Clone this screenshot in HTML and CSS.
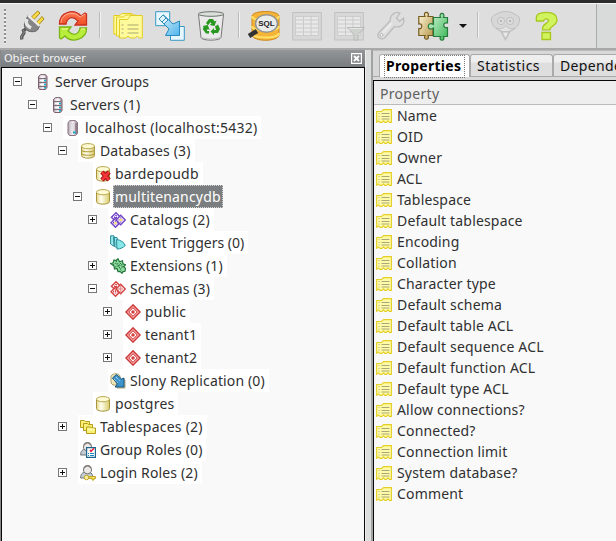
FILE: index.html
```html
<!DOCTYPE html>
<html lang="en">
<head>
<meta charset="utf-8">
<title>Object browser</title>
<link rel="stylesheet" href="styles.css">
</head>
<body>
<svg class="defs" aria-hidden="true">
  <defs>
    <linearGradient id="gold" x1="0" x2="1"><stop offset="0" stop-color="#e5d889"/><stop offset=".35" stop-color="#fffff0"/><stop offset="1" stop-color="#d8cb6a"/></linearGradient>
    <linearGradient id="steel" x1="0" x2="1"><stop offset="0" stop-color="#b0a4b0"/><stop offset=".5" stop-color="#f5f3f5"/><stop offset="1" stop-color="#9b8a96"/></linearGradient>
    <linearGradient id="red" x1="0" y1="0" x2="0" y2="1"><stop offset="0" stop-color="#ff7a55"/><stop offset="1" stop-color="#ee4f22"/></linearGradient>
    <linearGradient id="blue" x1="0" y1="0" x2="1" y2="1"><stop offset="0" stop-color="#dff4ff"/><stop offset="1" stop-color="#4fb4ea"/></linearGradient>
    <linearGradient id="tan" x1="0" y1="0" x2="1" y2="1"><stop offset="0" stop-color="#fff8dc"/><stop offset="1" stop-color="#b49345"/></linearGradient>
    <linearGradient id="green" x1="0" y1="0" x2="1" y2="1"><stop offset="0" stop-color="#d8f8dc"/><stop offset="1" stop-color="#38b556"/></linearGradient>
    <symbol id="servers" viewBox="0 0 16 16"><path d="M3.500 2.500 5.500.6h5l1.500 1.900v11l-1.500 2h-6l-1-1.500z" fill="url(#steel)" stroke="#80606f"/><path d="M4 4.500h7M4 8.500h7M4 12.500h7" stroke="#806b7a"/><path d="M5 3h5M5 6.500h4M5 10.500h4" stroke="#fff"/><path d="M9 6.500h2M9 10.500h2M9 13.800h2" stroke="#19b5cc" stroke-width="1.500"/></symbol>
    <symbol id="server" viewBox="0 0 16 16"><path d="M3 2.500 5 .6h5.500l2 1.900v11l-2 2h-6L3 13.500z" fill="url(#steel)" stroke="#8b7480"/><path d="M4.500 4h6M5.500 4v10M8 4v9" stroke="#dad5da"/><path d="M11 3v11" stroke="#765c6a"/><path d="M8 12.500h3" stroke="#26acc1" stroke-width="2"/></symbol>
    <symbol id="database" viewBox="0 0 16 16"><path d="M1.500 3.200v9.300c0 3.500 13 3.500 13 0V3.200z" fill="url(#gold)" stroke="#a8943a"/><ellipse cx="8" cy="3.200" rx="6.500" ry="2.600" fill="#fffbd5" stroke="#b7a54c"/></symbol>
    <symbol id="databases" viewBox="0 0 16 16"><use href="#database"/><path d="M1.500 6.500c0 3 13 3 13 0M1.500 10c0 3 13 3 13 0" fill="none" stroke="#b7a54c" stroke-width="1.200"/></symbol>
    <symbol id="database-off" viewBox="0 0 16 16"><use href="#database"/><path d="m7 6 7 8m0-8-7 8" stroke="#a70f18" stroke-width="4.500"/><path d="m7 6 7 8m0-8-7 8" stroke="#f43737" stroke-width="2.600"/></symbol>
    <symbol id="stack" viewBox="0 0 16 16"><g fill="#fff" stroke="currentColor" stroke-width="1.500"><path d="m6 .8 4.500 4.500L6 9.800 1.500 5.300z"/><path d="m5.500 6.200 4.500 4.500-4.500 4.500L1 10.700z"/><path d="m10.700 3.300 4.600 4.700-4.600 4.700L6.100 8z"/></g><path d="M4 5.300h4M3 10.700h5M8.500 8h4.500M6 3v4M5.500 8.500v4.500M10.700 5.500v5" stroke="currentColor" stroke-width="1.700" stroke-dasharray="1 1"/></symbol>
    <symbol id="catalogs" viewBox="0 0 16 16"><use href="#stack"/><path d="M9.500 8h2.500M4.500 11h2" stroke="#ffe866" stroke-width="2"/></symbol>
    <symbol id="triggers" viewBox="0 0 16 16"><path d="M.6.800H4l1 9.500-1.500.700L.6 9zM3.500 2.500H7l2 9-2.500 1L4 11z" fill="#9be8ea" stroke="#298b99"/><path d="M6.500 4.500c4.500.500 7.500 3 8.800 6-2 2-5 3.700-8.300 3.500z" fill="#87e8e9" stroke="#298b99"/></symbol>
    <symbol id="extensions" viewBox="0 0 16 16"><path d="m.7 5.500 2.300-.5 1-3 2 .5L8 .8l1.500 3 3-1 .5 3 2.500 1-2 2 2 1.500-.5 3-2 .3-1 1.700-2-2-2 .2-1-3-2.500.5-.5-3z" fill="#8fdda1" stroke="#24743a" stroke-width="1.200"/><path d="m3 7 3-2 2 3 3-3 2 4-3 2 2 2M6 3l3 4 3 1M5 9l4-1 1 3" fill="none" stroke="#24743a" stroke-dasharray="1.500 1"/></symbol>
    <symbol id="schema" viewBox="0 0 16 16"><path d="m8 .8 7.200 7.200L8 15.200.8 8z" fill="#f4a0a0" stroke="#cc3434" stroke-width="1.300"/><path d="m8 3.800 4.200 4.200L8 12.200 3.800 8z" fill="#fff" stroke="#d44141"/><circle cx="8" cy="8" r="1.800" fill="#d44141"/></symbol>
    <symbol id="slony" viewBox="0 0 16 16"><path d="M1 3c2-3 8-3 9 0v9H3L1 10z" fill="#eee7ba" stroke="#aaa174"/><path d="M6 7h9v8H7z" fill="#eee7ba" stroke="#aaa174"/><path d="m2.500 5 4-3.500 5 4.500 2.500-1v9H5l2.500-3z" fill="#3f94cc" stroke="#17557d"/><path d="m4 6 4 4m-2-6 4 4" stroke="#d6eeff" stroke-dasharray="1 1"/></symbol>
    <symbol id="folders" viewBox="0 0 16 16"><g fill="#f8ef78" stroke="#b49c19"><path d="M.5 1.500h4l1 1h4v6h-9z"/><path d="M3.500 4.500h4l1 1h4v6h-9z"/><path d="M6.500 8h4l1 1h4v5.500h-9z"/></g><path d="M7.500 10.500h7" stroke="#fffba8" stroke-width="2"/></symbol>
    <symbol id="person" viewBox="0 0 16 16"><path d="M.6 13c0-4 2-5.500 4-5.500h5c2 0 3 2 3.400 5.500z" fill="#c2cbd0" stroke="#6d7478"/><path d="M3.500 5c0-6 8-6 8 0 0 5-8 5-8 0z" fill="#ede9e6" stroke="#74716f"/><path d="M4 3c2-3 5-3 7 0" fill="none" stroke="#807d79" stroke-width="1.500"/></symbol>
    <symbol id="group-role" viewBox="0 0 16 16"><use href="#person"/><path d="M6.600 5.600h8.800v9.800H6.600z" fill="#fff" stroke="#1c658d" stroke-width="1.200"/><path d="m10 8 1 1.300 3-3" fill="none" stroke="#e51e35" stroke-width="1.500"/><path d="M8 11.500h1m1 0h4m-6 2h1m1 0h4" stroke="#1685c0"/></symbol>
    <symbol id="login-role" viewBox="0 0 16 16"><use href="#person"/><circle cx="6.500" cy="12.500" r="2.300" fill="#f7ed9c" stroke="#c2a72a"/><path d="M9 11.500h6.500v2H14v1.500h-2v-1.500H9z" fill="#f3df55" stroke="#c2a72a"/></symbol>
    <symbol id="property" viewBox="0 0 16 14"><path d="M.6 2.500h5l2-1.900h7.800v12.800h-2l-1.500-1.500-1.500 1.500H9l-1.500-1.500L6 13.400H4l-1.500-1.500L.6 13.400z" fill="#fffaa8" stroke="#e4cf25" stroke-width="1.100"/><path d="M2.500 4.500h1m2 0h8m-11 3h1m2 0h8m-11 2.500h1m2 0h8" stroke="#aaa879"/></symbol>
    <symbol id="grid" viewBox="0 0 30 30"><path d="M.7 1.500h28.600v27.500H.7z" fill="#d8d8d8" stroke="#bfc1bf"/><path d="M3.500 5.500h23v19h-23z" fill="#e8e8e8" stroke="#cdcdcd"/><path d="M4 9h22M4 13h22M4 17h22M4 21h22M11.500 5v20M19 5v20" stroke="#cacaca"/></symbol>
  </defs>
</svg>

<div class="window">
  <header class="toolbar">
    <div class="tools">
      <span class="grip"></span>
      <svg class="tool" viewBox="0 0 30 30"><path d="M5 28.500c-2-6 4-4 1.500-9l3-2" fill="none" stroke="#555" stroke-width="3.200"/><path d="M5 28c-2-5 4-4 1.500-9" fill="none" stroke="#999"/><path d="m14.500 6 6-6 2.500 2-6 6.500zm4.500 6 6-6.500 2 2.500-5.500 6z" fill="#f8da47" stroke="#a98915"/><path d="M11 4.500 22.500 15l-2 4c-3 2.500-8 2-11 0-3-3-2.500-7-.5-10z" fill="#858585" stroke="#606060"/><path d="M11 4.500 22.500 15" stroke="#ececec" stroke-width="2.200"/><path d="M10 8c-2 4 0 7 4 9" fill="none" stroke="#e5e5e5" stroke-width="3.500"/></svg>
      <svg class="tool refresh" viewBox="0 0 30 30"><path d="M1.500 13C1 1 16-3 23 5l4-3 1.500 1v11H17l3-4C14 4 9 7 8 13z" fill="url(#red)" stroke="#c93020" stroke-width="1.300"/><path d="M28.500 17C29 28 14 33 7 25l-4 3-1.500-1V16H13l-3 4c6 6 11 3 12-3z" fill="#b9ed3c" stroke="#79b516" stroke-width="1.300"/><path d="M3 12C3 3 15-1 22 6l5-3" fill="none" stroke="#ffb094"/><path d="M4 18h6m13 0h4" stroke="#efff9e"/></svg>
      <span class="separator first"></span>
      <svg class="tool" viewBox="0 0 30 30"><g fill="#fffa9c" stroke="#e4cd22"><path d="M.8 4.500h6l2-2h10V23h-2l-2-2-2 2H.8z"/><path d="M3.500 6h7l2-2h10v21h-19z"/><path d="M6.500 8.500h8l3-4h11.800v22.500h-3l-2-2-2 2H17l-2-2-2 2H6.500z"/></g><path d="M8.500 14h2m4 0h11m-17 4h2m4 0h11m-17 4h2m4 0h11" stroke="#aaa76e" stroke-width="1.200"/></svg>
      <svg class="tool" viewBox="0 0 30 30"><path d="M.7.700h14v14H.7zM15.500 15.500h13.800v13.800H15.500z" fill="#e8f6fd" stroke="#379ac5"/><path d="m4 8 4.500-4 9.500 9 6.500-3v14.500H10.500L14 18z" fill="url(#blue)" stroke="#268bc0"/><path d="m4 8 4-4 5 5-4 4zM7 11l4-4" fill="#dff3ff" stroke="#348ebb"/></svg>
      <svg class="tool" viewBox="0 0 30 30"><path d="M1.500 3.500h25L24 26.500c-.4 3.500-19.600 3.500-20 0z" fill="#e9eae9" stroke="#777"/><ellipse cx="14" cy="3" rx="12.700" ry="2.300" fill="#dce0dc" stroke="#6d736e"/><path d="M5 26.500c4 2 13 2 18 0" fill="none" stroke="#bbb"/><g fill="#289821"><path d="m9 12 3-4h4l1.500 2.500 2-1-2 5.500-5-1 2-1.200-1-1.500-2.500 3z"/><path d="m18 15.500 3-2 2 4.500-2 4h-4v2l-3.500-3.500 3.500-3.500v2h2z"/><path d="M12 22.500H9L5.700 18l1-2-1-1 5-1 2 5-2-1-1 2H12z"/></g></svg>
      <span class="separator second"></span>
      <svg class="tool sql" viewBox="0 0 30 30"><path d="M3 5c1-6 26-6 27 0v19c-1 7-26 7-27 0z" fill="#f5b437" stroke="#ce8618"/><path d="M3 5c0 6 27 6 27 0M3 15c0 6 27 6 27 0M3 22c0 6 27 6 27 0" fill="none" stroke="#ffdf68" stroke-width="2"/><path d="m0 25 8-5" stroke="#333" stroke-width="4.500"/><ellipse cx="17.500" cy="12.500" rx="11" ry="8.800" fill="#e9edef" fill-opacity=".97" stroke="#92938e" stroke-width="1.500"/><text x="17.500" y="14.800">SQL</text></svg>
      <svg class="tool" viewBox="0 0 30 30"><use href="#grid"/></svg>
      <svg class="tool" viewBox="0 0 30 30"><use href="#grid"/><path d="M13.500 16.500h17l-6.500 7V29h-4v-5.500z" fill="#d0d2d0" stroke="#b7bab7"/><path d="M15 17.500h13" stroke="#e5e5e5"/></svg>
      <svg class="tool" viewBox="0 0 30 30"><path d="M14 10c0-6 5-10 10-8l-3.500 5 3 3.500 4-3.500c2 7-4 10-9 8.500L9 26.500c-3 4-10-1-6-5z" fill="#dcdddc" stroke="#b9bab9" stroke-width="1.200"/><path d="m7 22 9-10" stroke="#ebebeb" stroke-width="2"/><circle cx="5.500" cy="24" r="1.500" fill="#eee" stroke="#bbb"/></svg>
      <svg class="tool puzzle" viewBox="0 0 30 30"><path d="M.8 5.500h6.200c-3-5.500 5.500-5.500 3 0h5v19h-5c2.500 5-5.500 5-3 0H.8v-7c4 1.500 4-6 0-4.500z" fill="url(#tan)" stroke="#765b20" stroke-width="1.200"/><path d="M15.500 6.500h7c-2.500-5.500 5.500-5.500 3 0h4V12c-5-1.500-5 6 0 4.500v9h-4c2.500 5-5.500 5-3 0h-7V17c-7 4.500-7-7.500 0-3.500z" fill="url(#green)" stroke="#247b3b" stroke-width="1.200"/></svg>
      <span class="dropdown"></span>
      <span class="separator third"></span>
      <svg class="tool mascot" viewBox="0 0 30 30"><path d="M6 3.500c5-4 14-4 19 0 8 2 4 11 0 14l-5 3-4.500 8.800L11 20.500l-5-3C2 14.500-2 5.500 6 3.500z" fill="#d7d7d7" stroke="#bebfbe"/><g fill="#e2e2e2" stroke="#bebebe"><circle cx="11" cy="10" r="3.500"/><circle cx="20" cy="10" r="3.500"/></g><circle cx="11" cy="10" r="1.300" fill="#b5b5b5"/><circle cx="20" cy="10" r="1.300" fill="#b5b5b5"/><path d="M6 17c5 2 7 0 9.500-2 3 2 5 4 9.500 2-4 5-15 5-19 0z" fill="#e2e2e2" stroke="#bebebe"/><path d="m12 21 3.500 7 3.500-7z" fill="#e8e8e8" stroke="#bebebe"/></svg>
      <svg class="tool help" viewBox="0 0 30 30"><path d="M4.500 10C3 3 8 1.300 14 1.300c7 0 11 2.700 11 7.500 0 6-7 5.700-7 10h-7.500c-.500-7 6-5.800 6-9 0-2.500-4.500-2.500-5 .2zM10 21.500h8.500v7H10z" fill="#d1f45e" stroke="#a8c71e" stroke-width="1.300"/></svg>
    </div>
    <div class="toolbar-rest"></div>
  </header>

  <main class="workspace">
    <section class="browser">
      <h1 class="caption">Object browser<svg class="close" viewBox="0 0 11 11"><path d="M.6.600h9.800v9.800H.6z"/><path class="cross" d="m3 3 5 5m0-5L3 8"/></svg></h1>
      <div class="tree-pane">
        <ul class="tree">
          <li><div class="node"><i class="toggle minus"></i><span class="item"><svg><use href="#servers"/></svg><span class="label plain">Server Groups</span></span></div>
          <ul><li><div class="node"><i class="toggle minus"></i><span class="item"><svg><use href="#servers"/></svg><span class="label">Servers (1)</span></span></div>
            <ul><li><div class="node"><i class="toggle minus"></i><span class="item white"><svg><use href="#server"/></svg><span class="label wide">localhost (localhost:5432)</span></span></div>
              <ul>
                <li><div class="node"><i class="toggle minus"></i><span class="item white"><svg><use href="#databases"/></svg><span class="label">Databases (3)</span></span></div>
                  <ul>
                    <li><div class="node"><i class="toggle none"></i><span class="item white"><svg><use href="#database-off"/></svg><span class="label wide">bardepoudb</span></span></div></li>
                    <li><div class="node"><i class="toggle minus"></i><span class="item white"><svg><use href="#database"/></svg><span class="label selected">multitenancydb</span></span></div>
                      <ul>
                        <li><div class="node"><i class="toggle plus"></i><span class="item white"><svg class="violet"><use href="#catalogs"/></svg><span class="label wide">Catalogs (2)</span></span></div></li>
                        <li><div class="node"><i class="toggle none"></i><span class="item white"><svg><use href="#triggers"/></svg><span class="label plain">Event Triggers (0)</span></span></div></li>
                        <li><div class="node"><i class="toggle plus"></i><span class="item white"><svg><use href="#extensions"/></svg><span class="label">Extensions (1)</span></span></div></li>
                        <li><div class="node"><i class="toggle minus"></i><span class="item white"><svg class="crimson"><use href="#stack"/></svg><span class="label">Schemas (3)</span></span></div>
                          <ul>
                            <li><div class="node"><i class="toggle plus"></i><span class="item white"><svg><use href="#schema"/></svg><span class="label wide">public</span></span></div></li>
                            <li><div class="node"><i class="toggle plus"></i><span class="item white"><svg><use href="#schema"/></svg><span class="label">tenant1</span></span></div></li>
                            <li><div class="node"><i class="toggle plus"></i><span class="item white"><svg><use href="#schema"/></svg><span class="label">tenant2</span></span></div></li>
                          </ul></li>
                        <li><div class="node"><i class="toggle none"></i><span class="item white"><svg><use href="#slony"/></svg><span class="label">Slony Replication (0)</span></span></div></li>
                      </ul></li>
                    <li><div class="node"><i class="toggle none"></i><span class="item white"><svg><use href="#database"/></svg><span class="label wide">postgres</span></span></div></li>
                  </ul></li>
                <li><div class="node"><i class="toggle plus"></i><span class="item white"><svg><use href="#folders"/></svg><span class="label wide">Tablespaces (2)</span></span></div></li>
                <li><div class="node"><i class="toggle none"></i><span class="item white"><svg><use href="#group-role"/></svg><span class="label">Group Roles (0)</span></span></div></li>
                <li><div class="node"><i class="toggle plus"></i><span class="item white"><svg><use href="#login-role"/></svg><span class="label">Login Roles (2)</span></span></div></li>
              </ul></li></ul></li></ul></li>
        </ul>
      </div>
    </section>
    <div class="sash"></div>
    <section class="details">
      <nav class="tabs"><span class="tab active"><b>Properties</b></span><span class="tab statistics">Statistics</span><span class="tab dependencies">Dependencies</span></nav>
      <div class="properties">
        <div class="column">Property</div>
        <ul class="property-list">
          <li><svg><use href="#property"/></svg>Name</li>
          <li><svg><use href="#property"/></svg>OID</li>
          <li><svg><use href="#property"/></svg>Owner</li>
          <li><svg><use href="#property"/></svg>ACL</li>
          <li><svg><use href="#property"/></svg>Tablespace</li>
          <li><svg><use href="#property"/></svg>Default tablespace</li>
          <li><svg><use href="#property"/></svg>Encoding</li>
          <li><svg><use href="#property"/></svg>Collation</li>
          <li><svg><use href="#property"/></svg>Character type</li>
          <li><svg><use href="#property"/></svg>Default schema</li>
          <li><svg><use href="#property"/></svg>Default table ACL</li>
          <li><svg><use href="#property"/></svg>Default sequence ACL</li>
          <li><svg><use href="#property"/></svg>Default function ACL</li>
          <li><svg><use href="#property"/></svg>Default type ACL</li>
          <li><svg><use href="#property"/></svg>Allow connections?</li>
          <li><svg><use href="#property"/></svg>Connected?</li>
          <li><svg><use href="#property"/></svg>Connection limit</li>
          <li><svg><use href="#property"/></svg>System database?</li>
          <li><svg><use href="#property"/></svg>Comment</li>
        </ul>
      </div>
    </section>
  </main>
</div>
</body>
</html>
```
FILE: styles.css
```css
* { box-sizing: border-box; }
body { margin: 0; overflow: hidden; font: 14px/20px "Noto Sans", "Open Sans", sans-serif; color: #303030; }
ul { margin: 0; padding: 0; list-style: none; }
svg { display: block; flex: none; }
.defs { position: absolute; width: 0; height: 0; }
.window { width: 616px; height: 541px; display: flex; flex-direction: column; overflow: hidden; border-top: 3px solid #2c2c2c; background: #ddd; }

.toolbar { display: flex; height: 47px; flex: none; border-top: 1px solid #f5f5f5; border-bottom: 2px solid #a8a8a8; background: #dedede; }
.tools { display: flex; width: 597px; border-right: 1px solid #aaa; padding: 7px 0 0 4px; }
.toolbar-rest { flex: 1; background: #d9dbda; }
.grip { width: 2px; height: 35px; margin-top: -2px; margin-right: 11px; background: repeating-linear-gradient(#8c8c8c 0 2px, #f1f1f1 2px 4px); }
.tool { width: 30px; height: 30px; margin-right: 12px; flex: none; overflow: visible; }
.tool:nth-child(2) { margin-right: 11px; }
.tool.refresh { margin-right: 11px; }
.tool.sql { margin-right: 13px; }
.tool.puzzle { margin-right: 11px; }
.sql text { font: bold 8px "Liberation Sans", sans-serif; fill: #222; text-anchor: middle; }
.separator { width: 2px; height: 26px; border-left: 1px solid #bbb; border-right: 1px solid #f2f2f2; margin-top: 1px; flex: none; }
.first { margin-right: 12px; }
.second { margin-left: -1px; margin-right: 9px; }
.dropdown { width: 8px; height: 4px; margin: 13px 10px 0 0; background: #111; clip-path: polygon(0 0, 100% 0, 50% 100%); }
.third { margin-right: 11px; }

.workspace { flex: 1; min-height: 0; display: flex; }
.browser { width: 365px; flex: none; display: flex; flex-direction: column; border-left: 1px solid #888; }
.caption { display: flex; align-items: center; justify-content: space-between; height: 17px; flex: none; margin: 0; padding: 0 3px; background: linear-gradient(#939698, #7a7d80); color: #f2f2f2; font: 11px/14px "DejaVu Sans", sans-serif; letter-spacing: -.12px; }
.close { width: 11px; height: 11px; fill: none; stroke: #fff; stroke-width: 1.2; }
.cross { stroke-width: 2; }
.tree-pane { flex: 1; min-height: 0; border: solid #080808; border-width: 1px 1px 0; background: #f9f9f9; overflow: hidden; }
.tree { padding: 2px 0 0 11px; }
.tree ul { padding-left: 15px; }
.node { display: flex; align-items: center; height: 23px; white-space: nowrap; }
.toggle { width: 9px; height: 9px; margin-right: 11px; flex: none; border: 1px solid #777; background: linear-gradient(#111, #111) center / 5px 1px no-repeat, #fff; }
.plus { background: linear-gradient(#111, #111) center / 5px 1px no-repeat, linear-gradient(#111, #111) center / 1px 5px no-repeat, #fff; }
.none { visibility: hidden; }
.item { display: flex; align-items: center; height: 23px; padding: 0 2px; }
.item svg { width: 16px; height: 16px; margin-right: 2px; }
.violet { color: #7547c6; }
.crimson { color: #d54343; }
.white { background: #fff; }
.label { height: 23px; line-height: 23px; padding: 0 2px; letter-spacing: .13px; }
.plain { letter-spacing: 0; }
.wide { letter-spacing: .24px; }
.selected { margin-right: -2px; background: #7b7e80; color: #fff; outline: 1px dotted #d5d5d5; outline-offset: -1px; letter-spacing: .18px; }

.sash { width: 6px; flex: none; background: #dcdedd; border-left: 1px solid #ededed; }
.details { flex: 1; min-width: 0; display: flex; flex-direction: column; border-left: 2px solid #a2a2a2; background: #d8d8d8; }
.tabs { display: flex; height: 27px; flex: none; padding: 3px 0 0 6px; border-top: 1px solid #bbb; border-bottom: 1px solid #aaa; white-space: nowrap; }
.tab { flex: none; height: 22px; padding: 0 8px; border: 1px solid #aaa; border-bottom: 0; border-radius: 3px 3px 0 0; background: linear-gradient(#eee 0 7px, #dedede 8px); line-height: 22px; color: #111; letter-spacing: .35px; }
.active { width: 91px; height: 23px; padding: 1px 5px; background: #fff; }
.active b { display: block; height: 21px; line-height: 20px; outline: 1px dotted #777; color: #000; padding-left: 1px; letter-spacing: .27px; }
.statistics { width: 83px; padding-left: 6px; letter-spacing: .5px; }
.dependencies { width: 120px; padding-left: 6px; }
.properties { flex: 1; min-height: 0; margin-top: 3px; border-top: 1px solid #080808; border-left: 1px solid #080808; background: #f9f9f9; }
.column { height: 24px; padding-left: 6px; border-bottom: 1px solid #bbb; background: #eee; color: #606060; line-height: 25px; letter-spacing: .3px; }
.property-list li { display: flex; align-items: center; height: 21px; white-space: nowrap; letter-spacing: .17px; }
.property-list svg { width: 16px; height: 14px; margin: 0 5px 0 2px; }
```
